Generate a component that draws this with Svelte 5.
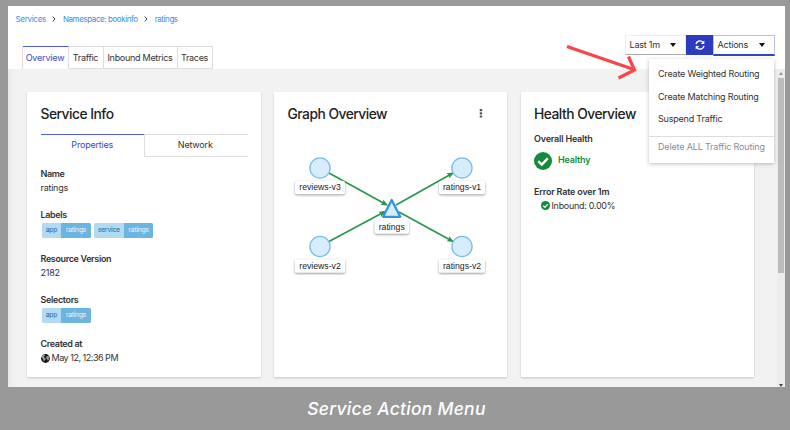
<script>
  const crumbs = ['Services', 'Namespace: bookinfo', 'ratings'];
  const tabs = [
    { name: 'Overview', width: 46 },
    { name: 'Traffic', width: 35 },
    { name: 'Inbound Metrics', width: 74 },
    { name: 'Traces', width: 35 }
  ];
  const actions = ['Create Weighted Routing', 'Create Matching Routing', 'Suspend Traffic'];
  const nodes = [
    { name: 'reviews-v3', x: 320, y: 168, w: 50 },
    { name: 'ratings-v1', x: 462, y: 168, w: 46 },
    { name: 'reviews-v2', x: 320, y: 246.5, w: 50 },
    { name: 'ratings-v2', x: 462, y: 246.5, w: 46 }
  ];
</script>

{#snippet label(key, value)}
  <span class="label"><span class="key">{key}</span><span class="value">{value}</span></span>
{/snippet}

{#snippet check(size)}
  <svg width={size} height={size} viewBox="0 0 18 18">
    <circle cx="9" cy="9" r="9" fill="#148a3c" />
    <path d="M4.3 9.2 7.8 12.6 13.8 6.3" fill="none" stroke="#fff" stroke-width="2.4" />
  </svg>
{/snippet}

<figure>
  <div class="screen">
    <header>
      <nav class="crumbs">
        {#each crumbs as crumb, i}
          {#if i > 0}
            <svg width="4" height="6" viewBox="0 0 4 6"><path d="M.8 .6 3 3 .8 5.4" fill="none" stroke="#444" stroke-width="1" /></svg>
          {/if}
          <a href="#top" class:wide={i === 0}>{crumb}</a>
        {/each}
      </nav>
      <div class="bar">
        <div class="tabs">
          {#each tabs as tab, i}
            <button class="tab" class:active={i === 0} style="width: {tab.width}px">{tab.name}</button>
          {/each}
        </div>
        <div class="tools">
          <button class="duration">Last 1m <i class="caret"></i></button>
          <button class="refresh" aria-label="Refresh">
            <svg width="10" height="10" viewBox="0 0 10 10" fill="none" stroke="#fff" stroke-width="1.4">
              <path d="M1 4.2A4 4 0 0 1 8 2.3L8.7 3M9 5.8A4 4 0 0 1 2 7.7L1.3 7" />
              <path d="M9.3 .4V3.9H5.8ZM.7 9.6V6.1H4.2Z" fill="#fff" stroke="none" />
            </svg>
          </button>
          <div class="actions">
            <button class="toggle">Actions <i class="caret"></i></button>
            <div class="menu">
              {#each actions as action}
                <div class="item">{action}</div>
              {/each}
              <div class="item disabled">Delete ALL Traffic Routing</div>
            </div>
          </div>
        </div>
      </div>
    </header>

    <main>
      <section class="card info">
        <h2>Service Info</h2>
        <div class="subtabs">
          <span class="current">Properties</span>
          <span class="other">Network</span>
        </div>
        <dl>
          <dt>Name</dt>
          <dd>ratings</dd>
          <dt>Labels</dt>
          <dd class="labels">{@render label('app', 'ratings')}{@render label('service', 'ratings')}</dd>
          <dt>Resource Version</dt>
          <dd>2182</dd>
          <dt>Selectors</dt>
          <dd class="labels">{@render label('app', 'ratings')}</dd>
          <dt>Created at</dt>
          <dd class="date">
            <svg width="9" height="9" viewBox="0 0 9 9">
              <circle cx="4.5" cy="4.5" r="4.4" fill="#151515" />
              <path d="M1 2.2 2.2 1 4 .8 3.8 2 2.8 2.8 3.4 3.7 4.5 4.3 4.6 5.4 3.6 6.2 3 7.8 2.3 6.2 2.2 5 1.1 4ZM5.7 2.2 7.2 1.9 8.2 3.3 7.7 4.2 8 5.4 6.8 6.8 6.1 5 5.2 4.3 5.1 3.2Z" fill="#fff" opacity=".6" />
            </svg>
            <span>May 12, 12:36 PM</span>
          </dd>
        </dl>
      </section>

      <section class="card graph">
        <div class="head">
          <h2>Graph Overview</h2>
          <svg width="4" height="10" viewBox="0 0 4 10" fill="#555">
            <rect x=".7" y=".1" width="2.5" height="2.1" rx=".5" /><rect x=".7" y="3.3" width="2.5" height="2.1" rx=".5" /><rect x=".7" y="6.5" width="2.5" height="2.1" rx=".5" />
          </svg>
        </div>
        <svg class="canvas" width="233" height="150" viewBox="274 140 233 150">
          <defs>
            <marker id="tip" viewBox="0 0 7 6" refX="6" refY="3" markerWidth="7" markerHeight="6" markerUnits="userSpaceOnUse" orient="auto">
              <path d="M0 0 7 3 0 6 1.6 3Z" fill="#28964a" />
            </marker>
          </defs>
          <g stroke="#28964a" stroke-width="1.6">
            <path d="M329 173 387 205" marker-end="url(#tip)" />
            <path d="M329 241.5 385 211.5" marker-end="url(#tip)" />
            <path d="M396 205 453 173" marker-end="url(#tip)" />
            <path d="M399 212 453 241.5" marker-end="url(#tip)" />
          </g>
          {#each nodes as node}
            <circle cx={node.x} cy={node.y} r="10.1" fill="#d6edfd" stroke="#78bde8" stroke-width="1.3" />
            <rect class="plate" x={node.x - node.w / 2} y={node.y + 12.7} width={node.w} height="13.6" rx="2" />
            <text x={node.x} y={node.y + 22.3}>{node.name}</text>
          {/each}
          <path d="M391.7 200 400.3 216.8H383.1Z" fill="#d6edfd" stroke="#3096d8" stroke-width="2.3" stroke-linejoin="round" />
          <rect class="plate" x="374.5" y="220.3" width="34.5" height="13.4" rx="2" />
          <text x="391.7" y="230.3">ratings</text>
        </svg>
      </section>

      <section class="card health">
        <h2>Health Overview</h2>
        <h3>Overall Health</h3>
        <div class="status">{@render check(18)}<b>Healthy</b></div>
        <h3 class="rate">Error Rate over 1m</h3>
        <div class="inbound">{@render check(9)}<span>Inbound: 0.00%</span></div>
      </section>

      <aside class="scroll">
        <i class="up"></i>
        <div class="thumb"></div>
        <i class="down"></i>
      </aside>
    </main>

    <svg class="pointer" width="74" height="38" viewBox="564 42 74 38" fill="none" stroke="#f94449" stroke-width="3.2">
      <path d="M567 46.5 634 69.5M628.5 56.5 634.5 70 618.5 78" />
    </svg>
  </div>
  <figcaption>Service Action Menu</figcaption>
</figure>

<style>
  :global(body) { margin: 0; background: #999; }
  figure {
    box-sizing: border-box; width: 790px; height: 430px; margin: 0; padding: 6px 5px 0 8px;
    background: #999; overflow: hidden; color: #333;
    font: 9px/12px Inter, 'Liberation Sans', sans-serif; letter-spacing: -0.2px;
  }
  button { font: inherit; letter-spacing: inherit; color: inherit; margin: 0; padding: 0; border: 0; background: #fff; box-sizing: border-box; white-space: nowrap; }
  svg { display: block; flex: none; }
  .screen { position: relative; width: 777px; height: 381px; background: #f1f1f1; display: flex; flex-direction: column; }
  header { height: 63px; background: #fff; }
  .crumbs { display: flex; align-items: center; height: 12px; padding: 7px 0 0 7.5px; font-size: 8px; letter-spacing: -0.42px; }
  .crumbs a { color: #3b8edb; text-decoration: none; white-space: nowrap; }
  .crumbs a.wide { letter-spacing: -0.3px; }
  .crumbs svg { margin: 0 6.5px 0 6.5px; }
  .bar { display: flex; justify-content: space-between; height: 34px; padding: 10px 10px 0 14px; }
  .tabs { display: flex; height: 23px; margin-top: 11px; border-left: 1px solid #ddd; box-sizing: border-box; letter-spacing: -0.28px; }
  .tab { height: 23px; border: 1px solid #ddd; border-left: 0; padding-right: 1px; }
  .tab.active { border-top: 1.5px solid #5560d8; border-bottom-color: #fff; color: #3c48ce; letter-spacing: -0.2px; }
  .tools { display: flex; height: 21px; }
  .duration, .toggle { display: flex; align-items: center; justify-content: space-between; height: 20px; border: 1px solid #eee; border-bottom: 1px solid #aaa; padding: 0 9.5px 0 3.5px; width: 61px; }
  .toggle { border-color: #b5bdf2; border-bottom: 2px solid #3443c4; width: 62px; height: 21px; }
  .caret { width: 0; height: 0; border: 3px solid transparent; border-top: 4px solid #151515; border-bottom: 0; }
  .refresh { width: 27px; height: 20px; background: #2b3bc0; display: flex; align-items: center; justify-content: center; }
  .actions { position: relative; }
  .menu {
    position: absolute; z-index: 2; top: 24px; right: 1px; width: 125px; height: 104px; box-sizing: border-box;
    padding-top: 4px; background: #fff; box-shadow: 0 1px 4px rgba(0, 0, 0, .25);
  }
  .item { height: 22.5px; line-height: 22.5px; padding-left: 9px; white-space: nowrap; }
  .item.disabled { margin-top: 5px; border-top: 1px solid #ddd; color: #8b8d8f; line-height: 20.5px; letter-spacing: -0.16px; }
  main { display: flex; flex: 1; padding-left: 19px; background: linear-gradient(90deg, #e9e9e9, #f2f2f2 6px); }
  .card { box-sizing: border-box; width: 234px; height: 285px; margin: 23px 13px 0 0; padding: 13px 13px 0; background: #fff; box-shadow: 0 1px 2px rgba(0, 0, 0, .18); }
  .info { padding-left: 13.5px; }
  .graph { width: 233px; padding: 13px 0 0; margin-right: 14px; }
  .health { width: 233px; margin-right: 0; }
  h2 { margin: 0; font-size: 13.8px; line-height: 18px; font-weight: 500; letter-spacing: -0.5px; white-space: nowrap; color: #222; }
  h3, dt { margin: 0; font-size: 9px; line-height: 12px; font-weight: 600; white-space: nowrap; }
  dt { letter-spacing: -0.36px; }
  .subtabs { display: flex; height: 22px; margin: 11px 0 0; text-align: center; line-height: 20px; }
  .subtabs span { box-sizing: border-box; width: 103.5px; height: 22.5px; }
  .subtabs .other { border: 1px solid #ddd; border-right: 0; padding-right: 2px; }
  .current { border-top: 1.5px solid #5560d8; color: #3c48ce; }
  dl { margin: 12px 0 0; }
  dd { margin: 2px 0 15px; height: 12px; letter-spacing: -0.24px; }
  dd.labels { display: flex; gap: 3px; margin: 2px 0 15.5px 1px; height: 14.5px; }
  .label { display: flex; height: 14.5px; font-size: 6.8px; line-height: 14.5px; border-radius: 1.5px; overflow: hidden; letter-spacing: -0.25px; text-align: center; }
  .key { padding: 0 4.2px; background: #b2daf1; color: #2467a6; }
  .value { box-sizing: border-box; width: 29.5px; background: #6cb5e1; color: #eaf6fd; }
  .date { display: flex; align-items: center; gap: 2px; letter-spacing: -0.48px; }
  .head { display: flex; justify-content: space-between; padding: 0 24px 0 13.5px; align-items: center; }
  .canvas { margin-top: 17px; }
  .canvas text { font: 8.7px 'Liberation Sans', sans-serif; text-anchor: middle; fill: #222; letter-spacing: 0; }
  .plate { fill: #fff; filter: drop-shadow(0 1px 1.2px rgba(0, 0, 0, .4)); }
  .health h3 { margin-top: 10px; }
  .status { display: flex; gap: 6px; margin-top: 7px; color: #148a3c; }
  .status b { font-weight: 600; line-height: 15px; }
  .health h3.rate { margin-top: 16px; }
  .inbound { display: flex; align-items: center; gap: 2px; margin: 1.5px 0 0 6.5px; letter-spacing: -0.3px; }
  .scroll { width: 8px; margin-left: auto; background: #ececec; display: flex; flex-direction: column; align-items: center; justify-content: space-between; padding: 3px 0 0; }
  .scroll i { border: 2px solid transparent; }
  .scroll .up { border-top: 0; border-bottom: 3px solid #999; }
  .scroll .down { border-bottom: 0; border-top: 3px solid #444; }
  .thumb { width: 6px; height: 195px; margin: 3px 0 auto; background: #bcbcbc; }
  .pointer { position: absolute; z-index: 3; left: 556px; top: 36px; }
  figcaption { width: 777px; text-align: center; line-height: 43px; color: #fff; font-size: 17.5px; font-weight: 500; font-style: italic; letter-spacing: .25px; }
</style>
